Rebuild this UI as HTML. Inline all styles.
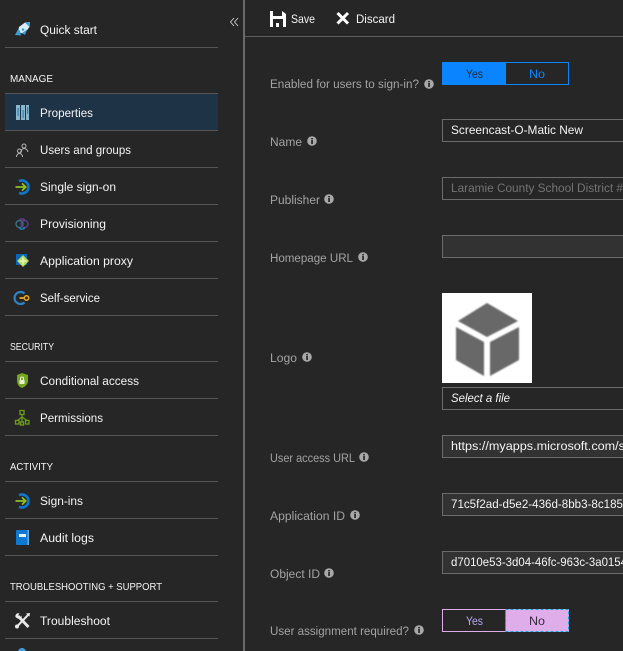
<!DOCTYPE html>
<html lang="en">
<head>
<meta charset="utf-8">
<title>Properties</title>
<style>
html,body{margin:0;padding:0;background:#262626;width:623px;height:651px;overflow:hidden}
svg{display:block}
text{font-family:"Liberation Sans",sans-serif;font-size:12.3px;fill:#f4f4f4}
.h{font-size:10.5px}
.l{fill:#a3a3a3}
</style>
</head>
<body>
<svg width="623" height="651" viewBox="0 0 623 651" xmlns="http://www.w3.org/2000/svg">
<defs>
<filter id="soft" x="-5%" y="-5%" width="110%" height="110%"><feGaussianBlur stdDeviation=".7"/></filter>
<g id="info"><circle r="4.8" fill="#a8a8a8"/><rect x="-.8" y="-1" width="1.7" height="4" fill="#262626"/><rect x="-.8" y="-3" width="1.7" height="1.400" fill="#262626"/></g>
<g id="arrowring"><path d="M-3.500-5.800A6.500 6.500 0 1 1-3.500 5.800" fill="none" stroke="#0a78d0" stroke-width="2.600"/><path d="M-7 0H3M-.5-3.600 3.200 0-.5 3.600" fill="none" stroke="#8cc220" stroke-width="1.800"/></g>
</defs>
<rect width="623" height="651" fill="#262626"/>

<!-- sidebar -->
<rect x="5" y="94" width="213" height="36" fill="#1e3345"/>
<g fill="#555">
<rect x="5" y="47" width="213" height="1"/><rect x="5" y="93" width="213" height="1"/><rect x="5" y="130" width="213" height="1"/><rect x="5" y="167" width="213" height="1"/><rect x="5" y="204" width="213" height="1"/><rect x="5" y="241" width="213" height="1"/><rect x="5" y="278" width="213" height="1"/><rect x="5" y="315" width="213" height="1"/><rect x="5" y="361" width="213" height="1"/><rect x="5" y="398" width="213" height="1"/><rect x="5" y="435" width="213" height="1"/><rect x="5" y="481" width="213" height="1"/><rect x="5" y="518" width="213" height="1"/><rect x="5" y="555" width="213" height="1"/><rect x="5" y="601" width="213" height="1"/><rect x="5" y="638" width="213" height="1"/>
</g>
<rect x="243" y="0" width="2" height="651" fill="#6a6a6a"/>
<rect x="245" y="36" width="378" height="1" fill="#5f5f5f"/>
<path d="M234 18 230.500 22 234 26M238 18 234.500 22 238 26" fill="none" stroke="#cfcfcf" stroke-width=".9"/>

<text lengthAdjust="spacingAndGlyphs" x="40" y="34" textLength="57">Quick start</text>
<text lengthAdjust="spacingAndGlyphs" class="h" x="10" y="82" textLength="43">MANAGE</text>
<text lengthAdjust="spacingAndGlyphs" x="40" y="117" textLength="53">Properties</text>
<text lengthAdjust="spacingAndGlyphs" x="40" y="154" textLength="91">Users and groups</text>
<text lengthAdjust="spacingAndGlyphs" x="40" y="191" textLength="76">Single sign-on</text>
<text lengthAdjust="spacingAndGlyphs" x="40" y="228" textLength="66">Provisioning</text>
<text lengthAdjust="spacingAndGlyphs" x="40" y="265" textLength="93">Application proxy</text>
<text lengthAdjust="spacingAndGlyphs" x="40" y="302" textLength="60">Self-service</text>
<text lengthAdjust="spacingAndGlyphs" class="h" x="10" y="350" textLength="44">SECURITY</text>
<text lengthAdjust="spacingAndGlyphs" x="40" y="385" textLength="99">Conditional access</text>
<text lengthAdjust="spacingAndGlyphs" x="40" y="422" textLength="63">Permissions</text>
<text lengthAdjust="spacingAndGlyphs" class="h" x="10" y="470" textLength="43">ACTIVITY</text>
<text lengthAdjust="spacingAndGlyphs" x="40" y="505" textLength="43">Sign-ins</text>
<text lengthAdjust="spacingAndGlyphs" x="40" y="542" textLength="54">Audit logs</text>
<text lengthAdjust="spacingAndGlyphs" class="h" x="10" y="590" textLength="152">TROUBLESHOOTING + SUPPORT</text>
<text lengthAdjust="spacingAndGlyphs" x="40" y="625" textLength="70">Troubleshoot</text>

<!-- sidebar icons -->
<g>
<path d="M19 27 25 22.500 30 22 29.500 27 24 34 18 32Z" fill="#dcebf4"/>
<path d="M25 22.500 30 22 29.500 27Z" fill="#3d9fd6"/>
<path d="M18.500 28.500 15 35 21 35.500 20 31Z" fill="#3d9fd6"/>
<path d="M22 33 27 29.500 25 35Z" fill="#3d9fd6"/>
<circle cx="23" cy="29.500" r="1.300" fill="#3d9fd6"/>
</g>
<g>
<rect x="16" y="105" width="4" height="15" fill="#8ab6cc"/><rect x="21" y="105" width="4" height="15" fill="#8ab6cc"/><rect x="26" y="105" width="3" height="15" fill="#8ab6cc"/>
<rect x="17.500" y="108" width="1.200" height="8" fill="#2e7fb5"/>
<rect x="22.500" y="110" width="1.200" height="8" fill="#2e7fb5"/>
<rect x="27" y="107" width="1.200" height="7" fill="#2e7fb5"/>
</g>
<g fill="none" stroke="#b5b5b5" stroke-width="1">
<circle cx="24" cy="146" r="2"/><path d="M20.500 153C21 149.500 23 148.500 24 148.500 26 148.500 27.500 150 28 152"/>
<circle cx="19.500" cy="151" r="2"/><path d="M16.500 157C16.500 154.500 18 153.500 19.500 153.500 21 153.500 22.500 154.500 22.500 157"/>
</g>
<use href="#arrowring" x="22.500" y="187"/>
<g fill="none" stroke-width="1.400">
<circle cx="19.500" cy="224" r="3.500" stroke="#3d6f88"/><circle cx="24.500" cy="224" r="3.500" stroke="#5c3f86"/>
<path d="M19 220.500A3.500 3.500 0 0 1 25 220.500" stroke="#5c3f86"/><path d="M19 227.500A3.500 3.500 0 0 0 25 227.500" stroke="#1f7fb8"/>
</g>
<g>
<rect x="16" y="254" width="11" height="11" fill="#0a66b8"/>
<path d="M23 255 29 261 23 267 17 261Z" fill="#b8dc5c"/>
<path d="M23 257.500 23 264.500M19.500 261H26.500" stroke="#eef7d0" stroke-width="1.200"/>
</g>
<g>
<path d="M24.500 293.500A6 6 0 1 0 24.500 302.500" fill="none" stroke="#2f82c4" stroke-width="2.200"/>
<path d="M19.500 298H25" stroke="#e5aa25" stroke-width="1.800"/>
<circle cx="26.500" cy="298" r="2.200" fill="none" stroke="#e5aa25" stroke-width="1.500"/>
</g>
<g>
<path d="M22 373 28 375V381C28 384 25 387 22 388 19 387 17 384 17 381V375Z" fill="#76a61c"/>
<rect x="19.500" y="380" width="5" height="4" fill="#e8efd8"/>
<path d="M20.500 380V378.500A1.500 1.500 0 0 1 23.500 378.500V380" fill="none" stroke="#e8efd8"/>
</g>
<g fill="none" stroke="#6d9c1c" stroke-width="1.300">
<rect x="20" y="410.500" width="4" height="4"/><rect x="15.500" y="420.500" width="3.500" height="3.500"/><rect x="20.500" y="422" width="3" height="3"/><rect x="25.500" y="420.500" width="3.500" height="3.500"/>
<path d="M22 414.500V422M22 417 17.500 420.500M22 417 27 420.500"/>
</g>
<use href="#arrowring" x="22.500" y="501"/>
<g>
<rect x="16" y="530" width="13" height="15" rx="1" fill="#0f78d0"/>
<rect x="19" y="534" width="7" height="3" fill="#e8f2fb"/>
<rect x="27.500" y="530" width="1.500" height="15" fill="#6aa9dc"/>
</g>
<g>
<path d="M18 616 28.500 627" stroke="#e8e8e8" stroke-width="2.800"/>
<path d="M28.500 614.500 17 626.500" stroke="#e8e8e8" stroke-width="2"/>
<path d="M15.500 617C15 614.500 17 612.500 19.500 613.500L18 615.500 20 617.500 21.500 615.500C22.500 618.500 19 620.500 15.500 617Z" fill="#e8e8e8"/>
<path d="M26 613.500 30 613 29.500 616.500Z" fill="#e8e8e8"/>
<circle cx="17" cy="626.500" r="2" fill="#e8e8e8"/>
</g>
<circle cx="22" cy="652" r="4" fill="#3d9fd6"/>

<!-- toolbar -->
<path d="M270 11H282L286 14V27H270Z" fill="#fff"/>
<rect x="273" y="11" width="9" height="5" fill="#262626"/>
<rect x="273" y="19" width="10" height="8" fill="#262626"/><rect x="276" y="23" width="3" height="4" fill="#fff"/>
<text lengthAdjust="spacingAndGlyphs" x="291" y="23" textLength="24">Save</text>
<path d="M337.500 13 348 23.500M348 13 337.500 23.500" stroke="#fff" stroke-width="3"/>
<text lengthAdjust="spacingAndGlyphs" x="356" y="23" textLength="39">Discard</text>

<!-- labels -->
<text lengthAdjust="spacingAndGlyphs" class="l" x="270" y="88" textLength="149">Enabled for users to sign-in?</text>
<text lengthAdjust="spacingAndGlyphs" class="l" x="270" y="146" textLength="32">Name</text>
<text lengthAdjust="spacingAndGlyphs" class="l" x="270" y="204" textLength="50">Publisher</text>
<text lengthAdjust="spacingAndGlyphs" class="l" x="270" y="262" textLength="83">Homepage URL</text>
<text lengthAdjust="spacingAndGlyphs" class="l" x="270" y="362" textLength="27">Logo</text>
<text lengthAdjust="spacingAndGlyphs" class="l" x="270" y="462" textLength="85">User access URL</text>
<text lengthAdjust="spacingAndGlyphs" class="l" x="270" y="520" textLength="75">Application ID</text>
<text lengthAdjust="spacingAndGlyphs" class="l" x="270" y="578" textLength="50">Object ID</text>
<text lengthAdjust="spacingAndGlyphs" class="l" x="270" y="635" textLength="139">User assignment required?</text>
<use href="#info" x="429" y="84"/>
<use href="#info" x="312" y="141"/>
<use href="#info" x="329" y="199"/>
<use href="#info" x="363" y="257"/>
<use href="#info" x="307" y="357"/>
<use href="#info" x="364" y="457"/>
<use href="#info" x="355" y="515"/>
<use href="#info" x="329" y="573"/>
<use href="#info" x="419" y="630"/>

<!-- toggle 1 -->
<rect x="442.500" y="62.500" width="126" height="22" fill="#262626" stroke="#0a84ff"/>
<rect x="442" y="62" width="64" height="23" fill="#0a84ff"/>
<text lengthAdjust="spacingAndGlyphs" x="466" y="78" textLength="17" style="fill:#1a2a3a">Yes</text>
<text lengthAdjust="spacingAndGlyphs" x="529" y="78" textLength="16" style="fill:#0a84ff">No</text>

<!-- inputs -->
<g stroke="#6b6b6b" stroke-width="1">
<rect x="442.500" y="119.500" width="190" height="22" fill="#262626"/>
<rect x="442.500" y="177.500" width="190" height="22" fill="#262626"/>
<rect x="442.500" y="235.500" width="190" height="22" fill="#323232"/>
<rect x="442.500" y="387.500" width="190" height="22" fill="#262626"/>
<rect x="442.500" y="435.500" width="190" height="22" fill="#323232"/>
<rect x="442.500" y="493.500" width="190" height="22" fill="#323232"/>
<rect x="442.500" y="551.500" width="190" height="22" fill="#323232"/>
</g>
<text lengthAdjust="spacingAndGlyphs" x="451" y="134" textLength="132">Screencast-O-Matic New</text>
<text lengthAdjust="spacingAndGlyphs" x="451" y="192" textLength="172" style="fill:#747474">Laramie County School District #</text>
<text lengthAdjust="spacingAndGlyphs" x="451" y="402" textLength="59" font-style="italic">Select a file</text>
<text lengthAdjust="spacingAndGlyphs" x="451" y="450" textLength="174">https://myapps.microsoft.com/s</text>
<text lengthAdjust="spacingAndGlyphs" x="451" y="508" textLength="172">71c5f2ad-d5e2-436d-8bb3-8c185</text>
<text lengthAdjust="spacingAndGlyphs" x="451" y="566" textLength="176">d7010e53-3d04-46fc-963c-3a0154</text>

<!-- logo -->
<rect x="442" y="293" width="90" height="90" fill="#fff"/>
<g filter="url(#soft)" fill="#686868">
<path d="M487 303 518 321 487 337 458 321Z"/>
<path d="M456 327 484 342V376L456 360Z"/>
<path d="M490 342 519 327V360L490 376Z"/>
</g>

<!-- toggle 2 -->
<rect x="442.500" y="609.500" width="126" height="22" fill="#262626" stroke="#dfaeea"/>
<rect x="505.500" y="609.500" width="63" height="22" fill="#dfaeea" stroke="#14a8e0" stroke-dasharray="3 2"/>
<text lengthAdjust="spacingAndGlyphs" x="466" y="625" textLength="17" style="fill:#b9a6f0">Yes</text>
<text lengthAdjust="spacingAndGlyphs" x="529" y="625" textLength="16" style="fill:#3a2a40">No</text>
</svg>
</body>
</html>
